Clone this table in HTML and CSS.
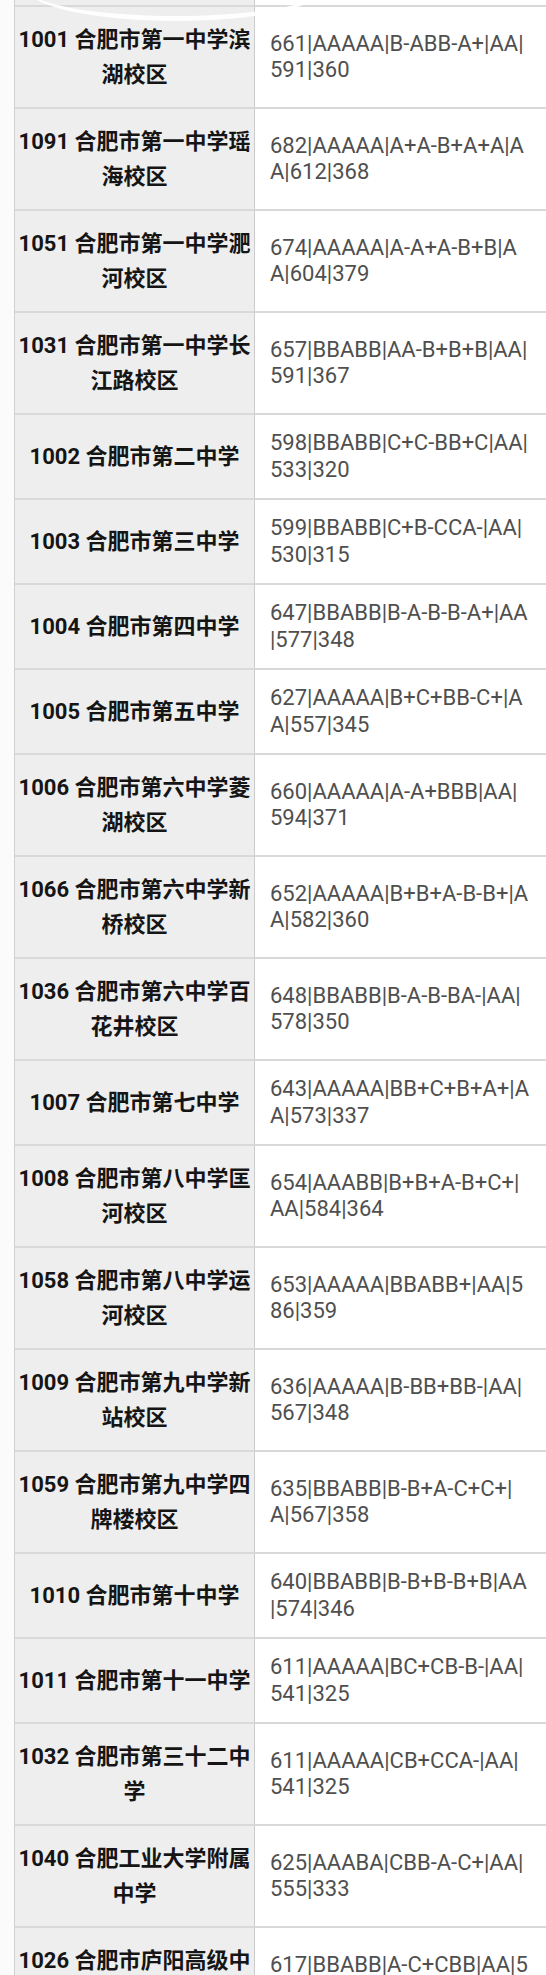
FILE: index.html
```html
<!DOCTYPE html>
<html lang="zh-CN">
<head>
<meta charset="utf-8">
<title>合肥市高中录取分数</title>
<link rel="stylesheet" href="styles.css">
</head>
<body>
<div class="sheet">
  <div class="glare"></div>
  <table class="scores">
    <colgroup><col class="c-name"><col class="c-data"></colgroup>
    <tbody>
      <tr class="cut"><td class="name"></td><td class="data"></td></tr>
      <tr><td class="name">1001 合肥市第一中学滨<br>湖校区</td><td class="data">661|AAAAA|B-ABB-A+|AA|<br>591|360</td></tr>
      <tr><td class="name">1091 合肥市第一中学瑶<br>海校区</td><td class="data">682|AAAAA|A+A-B+A+A|A<br>A|612|368</td></tr>
      <tr><td class="name">1051 合肥市第一中学淝<br>河校区</td><td class="data">674|AAAAA|A-A+A-B+B|A<br>A|604|379</td></tr>
      <tr><td class="name">1031 合肥市第一中学长<br>江路校区</td><td class="data">657|BBABB|AA-B+B+B|AA|<br>591|367</td></tr>
      <tr><td class="name">1002 合肥市第二中学</td><td class="data">598|BBABB|C+C-BB+C|AA|<br>533|320</td></tr>
      <tr><td class="name">1003 合肥市第三中学</td><td class="data">599|BBABB|C+B-CCA-|AA|<br>530|315</td></tr>
      <tr><td class="name">1004 合肥市第四中学</td><td class="data">647|BBABB|B-A-B-B-A+|AA<br>|577|348</td></tr>
      <tr><td class="name">1005 合肥市第五中学</td><td class="data">627|AAAAA|B+C+BB-C+|A<br>A|557|345</td></tr>
      <tr><td class="name">1006 合肥市第六中学菱<br>湖校区</td><td class="data">660|AAAAA|A-A+BBB|AA|<br>594|371</td></tr>
      <tr><td class="name">1066 合肥市第六中学新<br>桥校区</td><td class="data">652|AAAAA|B+B+A-B-B+|A<br>A|582|360</td></tr>
      <tr><td class="name">1036 合肥市第六中学百<br>花井校区</td><td class="data">648|BBABB|B-A-B-BA-|AA|<br>578|350</td></tr>
      <tr><td class="name">1007 合肥市第七中学</td><td class="data">643|AAAAA|BB+C+B+A+|A<br>A|573|337</td></tr>
      <tr><td class="name">1008 合肥市第八中学匡<br>河校区</td><td class="data">654|AAABB|B+B+A-B+C+|<br>AA|584|364</td></tr>
      <tr><td class="name">1058 合肥市第八中学运<br>河校区</td><td class="data">653|AAAAA|BBABB+|AA|5<br>86|359</td></tr>
      <tr><td class="name">1009 合肥市第九中学新<br>站校区</td><td class="data">636|AAAAA|B-BB+BB-|AA|<br>567|348</td></tr>
      <tr><td class="name">1059 合肥市第九中学四<br>牌楼校区</td><td class="data">635|BBABB|B-B+A-C+C+|<br>A|567|358</td></tr>
      <tr><td class="name">1010 合肥市第十中学</td><td class="data">640|BBABB|B-B+B-B+B|AA<br>|574|346</td></tr>
      <tr><td class="name">1011 合肥市第十一中学</td><td class="data">611|AAAAA|BC+CB-B-|AA|<br>541|325</td></tr>
      <tr><td class="name">1032 合肥市第三十二中<br>学</td><td class="data">611|AAAAA|CB+CCA-|AA|<br>541|325</td></tr>
      <tr><td class="name">1040 合肥工业大学附属<br>中学</td><td class="data">625|AAABA|CBB-A-C+|AA|<br>555|333</td></tr>
      <tr><td class="name">1026 合肥市庐阳高级中<br>学</td><td class="data">617|BBABB|A-C+CBB|AA|5<br>47|330</td></tr>
    </tbody>
  </table>
</div>
</body>
</html>
```

FILE: styles.css
```css
html, body {
  margin: 0;
  padding: 0;
  background: #fbfbfb;
}

body {
  overflow: hidden;
  font-family: Roboto, "Noto Sans CJK SC", "Noto Sans", sans-serif;
}

.sheet {
  position: relative;
  margin-left: 14px;
}

.scores {
  border-collapse: separate;
  border-spacing: 0;
  table-layout: fixed;
  width: 540px;
  border-left: 1px solid #d0d0d0;
}

.c-name { width: 240px; }
.c-data { width: 300px; }

.scores td {
  border-top: 2px solid #d9d9d9;
  padding: 15px 0;
  vertical-align: middle;
  font-size: 22px;
  white-space: nowrap;
}

.scores td.name {
  background: #eeeeee;
  border-right: 1px solid #cbcbcb;
  text-align: center;
  font-weight: 700;
  color: #151515;
  line-height: 35px;
  padding-left: 1px;
  padding-right: 1px;
}

.scores td.data {
  background: #ffffff;
  color: #4f4f4f;
  font-weight: 400;
  line-height: 26.5px;
  padding-left: 15px;
  padding-right: 10px;
}

.scores tr.cut td {
  border-top: 0;
  padding: 0;
  height: 5px;
  line-height: 5px;
}

.glare {
  position: absolute;
  top: -46px;
  left: 12px;
  width: 300px;
  height: 62px;
  border-bottom: 5px solid rgba(255, 255, 255, 0.9);
  border-radius: 50%;
  z-index: 2;
  pointer-events: none;
}
```
